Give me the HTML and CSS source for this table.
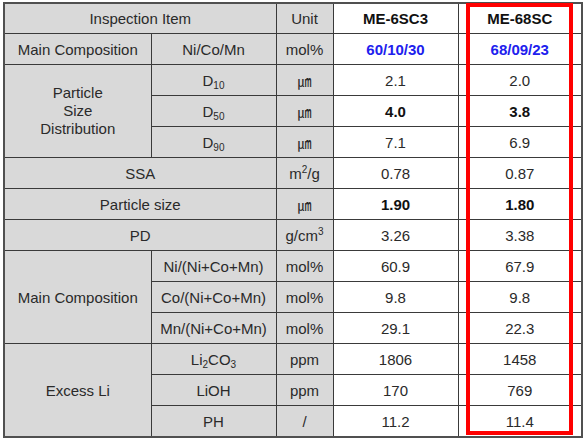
FILE: index.html
```html
<!DOCTYPE html>
<html>
<head>
<meta charset="utf-8">
<link rel="stylesheet" href="styles.css">
</head>
<body>
<div class="wrap">
<table class="spec">
  <colgroup>
    <col class="c1"><col class="c2"><col class="c3"><col class="c4"><col class="c5">
  </colgroup>
  <tr class="head">
    <td class="g" colspan="2">Inspection Item</td>
    <td class="g">Unit</td>
    <td class="b">ME-6SC3</td>
    <td class="b">ME-68SC</td>
  </tr>
  <tr>
    <td class="g">Main Composition</td>
    <td class="g">Ni/Co/Mn</td>
    <td class="g">mol%</td>
    <td class="blue">60/10/30</td>
    <td class="blue">68/09/23</td>
  </tr>
  <tr>
    <td class="g multi" rowspan="3">Particle<br>Size<br>Distribution</td>
    <td class="g">D<sub>10</sub></td>
    <td class="g um">㎛</td>
    <td>2.1</td>
    <td>2.0</td>
  </tr>
  <tr>
    <td class="g">D<sub>50</sub></td>
    <td class="g um">㎛</td>
    <td class="b">4.0</td>
    <td class="b">3.8</td>
  </tr>
  <tr>
    <td class="g">D<sub>90</sub></td>
    <td class="g um">㎛</td>
    <td>7.1</td>
    <td>6.9</td>
  </tr>
  <tr>
    <td class="g" colspan="2">SSA</td>
    <td class="g">m<sup>2</sup>/g</td>
    <td>0.78</td>
    <td>0.87</td>
  </tr>
  <tr>
    <td class="g" colspan="2">Particle size</td>
    <td class="g um">㎛</td>
    <td class="b">1.90</td>
    <td class="b">1.80</td>
  </tr>
  <tr>
    <td class="g" colspan="2">PD</td>
    <td class="g">g/cm<sup>3</sup></td>
    <td>3.26</td>
    <td>3.38</td>
  </tr>
  <tr>
    <td class="g" rowspan="3">Main Composition</td>
    <td class="g">Ni/(Ni+Co+Mn)</td>
    <td class="g">mol%</td>
    <td>60.9</td>
    <td>67.9</td>
  </tr>
  <tr>
    <td class="g">Co/(Ni+Co+Mn)</td>
    <td class="g">mol%</td>
    <td>9.8</td>
    <td>9.8</td>
  </tr>
  <tr>
    <td class="g">Mn/(Ni+Co+Mn)</td>
    <td class="g">mol%</td>
    <td>29.1</td>
    <td>22.3</td>
  </tr>
  <tr>
    <td class="g" rowspan="3">Excess Li</td>
    <td class="g">Li<sub>2</sub>CO<sub>3</sub></td>
    <td class="g">ppm</td>
    <td>1806</td>
    <td>1458</td>
  </tr>
  <tr>
    <td class="g">LiOH</td>
    <td class="g">ppm</td>
    <td>170</td>
    <td>769</td>
  </tr>
  <tr>
    <td class="g">PH</td>
    <td class="g">/</td>
    <td>11.2</td>
    <td>11.4</td>
  </tr>
</table>
<div class="highlight"></div>
</div>
</body>
</html>
```

FILE: styles.css
```css
html, body {
  margin: 0;
  padding: 0;
  background: #ffffff;
}
body {
  font-family: "Liberation Sans", Arial, sans-serif;
  font-size: 15px;
  color: #2a2a2a;
}
.wrap {
  position: relative;
  padding: 2px 0 0 3px;
  width: 578px;
}
.spec {
  border-collapse: collapse;
  table-layout: fixed;
  width: 578px;
  border: 2px solid #505050;
}
.c1 { width: 147px; }
.c2 { width: 125px; }
.c3 { width: 57px; }
.c4 { width: 125px; }
.c5 { width: 124px; }
.spec td {
  border: 1px solid #3a3a3a;
  height: 30px;
  padding: 0;
  text-align: center;
  vertical-align: middle;
  line-height: 17px;
  background: #ffffff;
}
.spec tr.head td {
  height: 29px;
}
.spec td.g {
  background: #d9d9d9;
}
.spec td.multi {
  line-height: 18px;
}
.spec td.b {
  font-weight: bold;
  color: #111111;
}
.spec td.blue {
  font-weight: bold;
  color: #2020ee;
}
.spec td.um {
  font-family: "Noto Sans CJK KR", "Noto Sans CJK JP", sans-serif;
  font-size: 14px;
}
sub {
  font-size: 10px;
  vertical-align: -3px;
  line-height: 0;
}
sup {
  font-size: 10px;
  vertical-align: 6px;
  line-height: 0;
}
.highlight {
  position: absolute;
  left: 466px;
  top: 3px;
  width: 99px;
  height: 424px;
  border: 4px solid #ff0000;
  pointer-events: none;
}
```
